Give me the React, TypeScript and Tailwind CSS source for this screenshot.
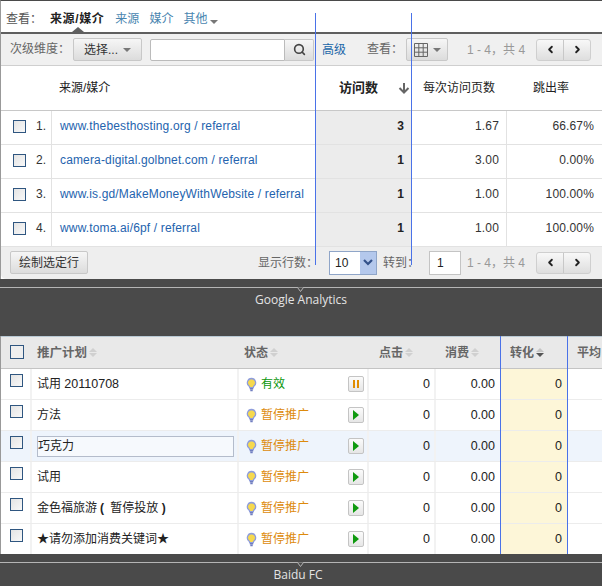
import type { ReactNode } from "react";
import { ChevronLeft, ChevronRight, Search } from "lucide-react";

const FONT = "font-['Liberation_Sans','Noto_Sans_CJK_SC',sans-serif]";

const gaRows = [
  { no: "1.", src: "www.thebesthosting.org / referral", visits: "3", pages: "1.67", bounce: "66.67%" },
  { no: "2.", src: "camera-digital.golbnet.com / referral", visits: "1", pages: "3.00", bounce: "0.00%" },
  { no: "3.", src: "www.is.gd/MakeMoneyWithWebsite / referral", visits: "1", pages: "1.00", bounce: "100.00%" },
  { no: "4.", src: "www.toma.ai/6pf / referral", visits: "1", pages: "1.00", bounce: "100.00%" },
];

const fcRows: { name: ReactNode; status: string; active?: boolean; editing?: boolean }[] = [
  { name: <>试用 <span className="text-[12.5px]">20110708</span></>, status: "有效", active: true },
  { name: "方法", status: "暂停推广" },
  { name: "巧克力", status: "暂停推广", editing: true },
  { name: "试用", status: "暂停推广" },
  { name: <>金色福旅游<span className="font-bold px-[3px]">(</span> 暂停投放 <span className="font-bold">)</span></>, status: "暂停推广" },
  { name: "★请勿添加消费关键词★", status: "暂停推广" },
];

const Caret = () => (
  <span className="inline-block w-0 h-0 border-x-[4px] border-x-transparent border-t-[4px] border-t-[#777]" />
);

const Check = ({ className = "" }: { className?: string }) => (
  <span className={`block w-[13px] h-[13px] border border-[#2f5680] bg-gradient-to-br from-[#e4e4e4] to-[#f8f8f8] ${className}`} />
);

const Pager = () => (
  <div className="flex w-[55px] h-[22px] rounded-[3px] border border-[#cfcfcf] bg-gradient-to-b from-[#f8f8f8] to-[#dedede] text-[#222]">
    <span className="flex-1 flex items-center justify-center border-r border-[#c8c8c8]">
      <ChevronLeft size={11} strokeWidth={4} />
    </span>
    <span className="flex-1 flex items-center justify-center">
      <ChevronRight size={11} strokeWidth={4} />
    </span>
  </div>
);

const Caption = ({ text, h, className = "" }: { text: string; h: string; className?: string }) => (
  <div className={`relative bg-[#4a4a4a] ${h}`}>
    <div className="absolute left-0 right-0 top-[8px] h-px bg-[#b5b5b5]" />
    <svg className="absolute left-[296px] top-[8px]" width="9" height="6" viewBox="0 0 9 6">
      <path d="M0 0.5H1.5L4.5 4.5L7.5 0.5H9" stroke="#b5b5b5" fill="#4a4a4a" />
    </svg>
    <div className={`absolute left-0 right-0 top-[12px] text-center text-[12px] leading-[17px] text-[#e4e4e4] font-['Open_Sans',sans-serif] ${className}`}>
      {text}
    </div>
  </div>
);

const SortArrows = ({ dark }: { dark?: boolean }) => (
  <span className="inline-flex flex-col gap-[1px] ml-[2px] items-center">
    <span className={`w-0 h-0 border-x-[4px] border-x-transparent border-b-[4px] ${dark ? "border-b-[#c4c4c4]" : "border-b-[#d0d0d0]"}`} />
    <span className={`w-0 h-0 border-x-[4px] border-x-transparent border-t-[4px] ${dark ? "border-t-[#555]" : "border-t-[#d0d0d0]"}`} />
  </span>
);

const Bulb = () => (
  <svg width="11" height="15" viewBox="0 0 11 15" className="shrink-0">
    <path d="M5.500 1.500a4.200 4.200 0 0 0-2.500 7.500c.5.4.6 1 .7 1.600h3.600c.1-.6.2-1.200.7-1.600a4.200 4.200 0 0 0-2.500-7.500z" fill="#f6d94e" stroke="#8f9ddb" strokeWidth="1.300" />
    <path d="M3.800 11.800h3.400M4.300 13.500h2.400" stroke="#6f7dc0" strokeWidth="1.400" />
  </svg>
);

const ActionBtn = ({ active }: { active?: boolean }) => (
  <span className="flex items-center justify-center w-[16px] h-[16px] rounded-[2px] border border-[#c4c4c4] bg-gradient-to-b from-[#fbfbfb] to-[#e6e6e6]">
    {active ? (
      <span className="flex gap-[2px]">
        <span className="w-[2px] h-[8px] bg-[#e08c00]" />
        <span className="w-[2px] h-[8px] bg-[#e08c00]" />
      </span>
    ) : (
      <span className="w-0 h-0 border-y-[5px] border-y-transparent border-l-[6px] border-l-[#0f9a0f]" />
    )}
  </span>
);

const GaReport = () => (
  <section className="relative bg-white border-t border-[#4a4a4a] border-l border-l-[#999] text-[12px] leading-[16px]">
    <div className="flex items-center h-[31px] pt-[5px] pl-[5px]">
      <span className="text-[#555]">查看：</span>
      <span className="ml-[8px] font-bold text-[#222] tracking-[0.6px]">来源/媒介</span>
      <span className="ml-[11px] text-[#4a86b0]">来源</span>
      <span className="ml-[10px] text-[#4a86b0]">媒介</span>
      <span className="ml-[10px] text-[#4a86b0]">其他</span>
      <span className="ml-[3px] mt-[2px]"><Caret /></span>
    </div>
    <div className="relative h-[34px] flex items-center border-t-2 border-[#5f5f5f] border-b border-b-[#cfcfcf] bg-[#f0f0f0] pl-[9px] text-[#666]">
      <span className="absolute left-[71px] -top-[7px] w-0 h-0 border-x-[6px] border-x-transparent border-b-[5px] border-b-[#5f5f5f]" />
      <span className="w-[63px] -mt-[2px]">次级维度：</span>
      <span className="flex items-center justify-center gap-[5px] w-[69px] h-[23px] rounded-[2px] border border-[#c8c8c8] bg-gradient-to-b from-[#f6f6f6] to-[#dcdcdc] text-[#333]">
        选择...
        <Caret />
      </span>
      <span className="ml-[8px] w-[135px] h-[22px] bg-white border border-[#bbb] rounded-l-[2px]" />
      <span className="flex items-center justify-center w-[29px] h-[22px] border border-l-0 border-[#c8c8c8] rounded-r-[2px] bg-gradient-to-b from-[#f6f6f6] to-[#dcdcdc] text-[#444]">
        <Search size={13} strokeWidth={3} />
      </span>
      <span className="ml-[8px] text-[#1a66a8]">高级</span>
      <span className="ml-[21px] -mt-[2px]">查看：</span>
      <span className="ml-[3px] flex items-center justify-center gap-[5px] w-[42px] h-[23px] rounded-[2px] border border-[#c8c8c8] bg-gradient-to-b from-[#f6f6f6] to-[#dcdcdc]">
        <svg width="14" height="14" viewBox="0 0 14 14" fill="none" stroke="#666">
          <path d="M.5.5h13v13H.5zM.5 4.800h13M.5 9.200h13M4.800.5v13M9.200.5v13" />
        </svg>
        <Caret />
      </span>
      <span className="ml-[19px] w-[69px] text-[#999]">1 - 4，共 4</span>
      <Pager />
    </div>

    <div className="flex h-[45px] items-center border-b border-[#c8c8c8] text-[#222]">
      <span className="w-[58px]" />
      <span className="w-[256px]">来源/媒介</span>
      <span className="w-[96px] flex items-center font-bold text-[13px] pl-[24px]">
        访问数
        <svg className="ml-[20px]" width="12" height="12" viewBox="0 0 12 12" fill="none" stroke="#666" strokeWidth="2">
          <path d="M6 1v9M1.500 6l4.500 4.500L10.500 6" />
        </svg>
      </span>
      <span className="w-[96px] pl-[12px]">每次访问页数</span>
      <span className="pl-[26px]">跳出率</span>
    </div>

    {gaRows.map((r) => (
      <div key={r.no} className="flex h-[34px] border-b border-[#e2e2e2] text-[#333] tracking-[0.15px]">
        <span className="w-[51px] pb-[3px] shrink-0 flex items-center border-r border-[#e2e2e2] pl-[12px]">
          <Check />
          <span className="ml-[10px]">{r.no}</span>
        </span>
        <span className="w-[263px] pb-[3px] shrink-0 flex items-center pl-[8px] text-[#2463ae] whitespace-nowrap">{r.src}</span>
        <span className="w-[96px] pb-[3px] shrink-0 flex items-center justify-end pr-[7px] bg-[#ececec] font-bold text-[#222]">{r.visits}</span>
        <span className="w-[96px] pb-[3px] shrink-0 flex items-center justify-end pr-[7px] border-r border-[#e2e2e2]">{r.pages}</span>
        <span className="w-[95px] pb-[3px] shrink-0 flex items-center justify-end pr-[8px]">{r.bounce}</span>
      </div>
    ))}

    <div className="flex items-center h-[32px] pb-[1px] bg-[#eeeeee] rounded-bl-[5px] pl-[9px] text-[#666]">
      <span className="flex items-center justify-center w-[78px] h-[23px] border border-[#c8c8c8] rounded-[2px] bg-gradient-to-b from-[#f6f6f6] to-[#dcdcdc] text-[#333]">绘制选定行</span>
      <span className="ml-[170px] w-[71px]">显示行数：</span>
      <span className="flex items-center w-[48px] h-[24px] border border-[#8fa5c8] bg-white pl-[5px] text-[#222]">
        10
        <span className="ml-auto flex items-center justify-center w-[16px] h-[22px] bg-[#b4c8ec] text-[#33518a]">
          <svg width="10" height="7" viewBox="0 0 10 7" fill="none" stroke="currentColor" strokeWidth="2.200">
            <path d="M1 1l4 4 4-4" />
          </svg>
        </span>
      </span>
      <span className="ml-[6px] w-[46px]">转到：</span>
      <span className="flex items-center w-[32px] h-[24px] border border-[#c4c4c4] bg-white pl-[7px] text-[#222]">1</span>
      <span className="ml-[6px] w-[69px] text-[#999]">1 - 4，共 4</span>
      <Pager />
    </div>

    <div className="absolute left-[314px] top-[12px] h-[252px] w-px bg-[#4a72e8]" />
    <div className="absolute left-[410px] top-[12px] h-[252px] w-px bg-[#4a72e8]" />
  </section>
);

const FcTable = () => (
  <section className="relative h-[218px] overflow-hidden bg-white border-l border-[#999] text-[12px] leading-[16px] text-[#222]">
    <div className="flex h-[33px] items-center bg-[#e9e9e9] border-t border-[#b9c9d4] border-b border-b-[#c4c4c4] font-bold text-[#666]">
      <span className="w-[36px] pl-[9px] -mt-[1px]"><Check className="!w-[14px] !h-[14px] !bg-none bg-[#eee]" /></span>
      <span className="w-[207px] flex items-center text-[12.5px]">推广计划<SortArrows /></span>
      <span className="w-[135px] flex items-center">状态<SortArrows /></span>
      <span className="w-[66px] flex items-center">点击<SortArrows /></span>
      <span className="w-[55px] flex items-center">消费<SortArrows /></span>
      <span className="w-[67px] flex items-center pl-[10px]">转化<SortArrows dark /></span>
      <span className="pl-[10px]">平均</span>
    </div>
    {fcRows.map((r, i) => (
      <div key={i} className={`flex h-[31px] border-b border-[#ececec] ${r.editing ? "bg-[#eef4fc]" : "bg-white"}`}>
        <span className="w-[31px] shrink-0 pl-[9px] pt-[5px] border-r-2 border-[#f2f2f2]"><Check /></span>
        <span className="w-[207px] shrink-0 flex items-center border-r-2 border-[#f2f2f2] pl-[5px]">
          {r.editing ? (
            <span className="w-[197px] h-[21px] flex items-center border border-[#b4bccb] bg-[#f6f9fd]">{r.name}</span>
          ) : (
            <span className="whitespace-nowrap">{r.name}</span>
          )}
        </span>
        <span className="w-[130px] shrink-0 flex items-center border-r-2 border-[#f2f2f2] pl-[7px]">
          <Bulb />
          <span className={`ml-[4px] ${r.active ? "text-[#0a960a]" : "text-[#dd8a0c]"}`}>{r.status}</span>
          <span className="ml-auto mr-[3px]"><ActionBtn active={r.active} /></span>
        </span>
        <span className="w-[67px] shrink-0 flex items-center justify-end pr-[4px] text-[12.5px] border-r-2 border-[#f2f2f2]">0</span>
        <span className="w-[64px] shrink-0 flex items-center justify-end pr-[5px] text-[12.5px]">0.00</span>
        <span className="w-[67px] shrink-0 flex items-center justify-end pr-[5px] text-[12.5px] bg-[#fdf6d8]">0</span>
        <span className="flex-1" />
      </div>
    ))}
    <div className="absolute left-[499px] top-0 bottom-0 w-px bg-[#4a72e8]" />
    <div className="absolute left-[566px] top-0 bottom-0 w-px bg-[#4a72e8]" />
  </section>
);

export default function App() {
  return (
    <div className={`w-[602px] h-[586px] overflow-hidden ${FONT}`}>
      <GaReport />
      <Caption text="Google Analytics" h="h-[57px]" />
      <FcTable />
      <Caption text="Baidu FC" h="h-[32px]" className="pr-[6px]" />
    </div>
  );
}
